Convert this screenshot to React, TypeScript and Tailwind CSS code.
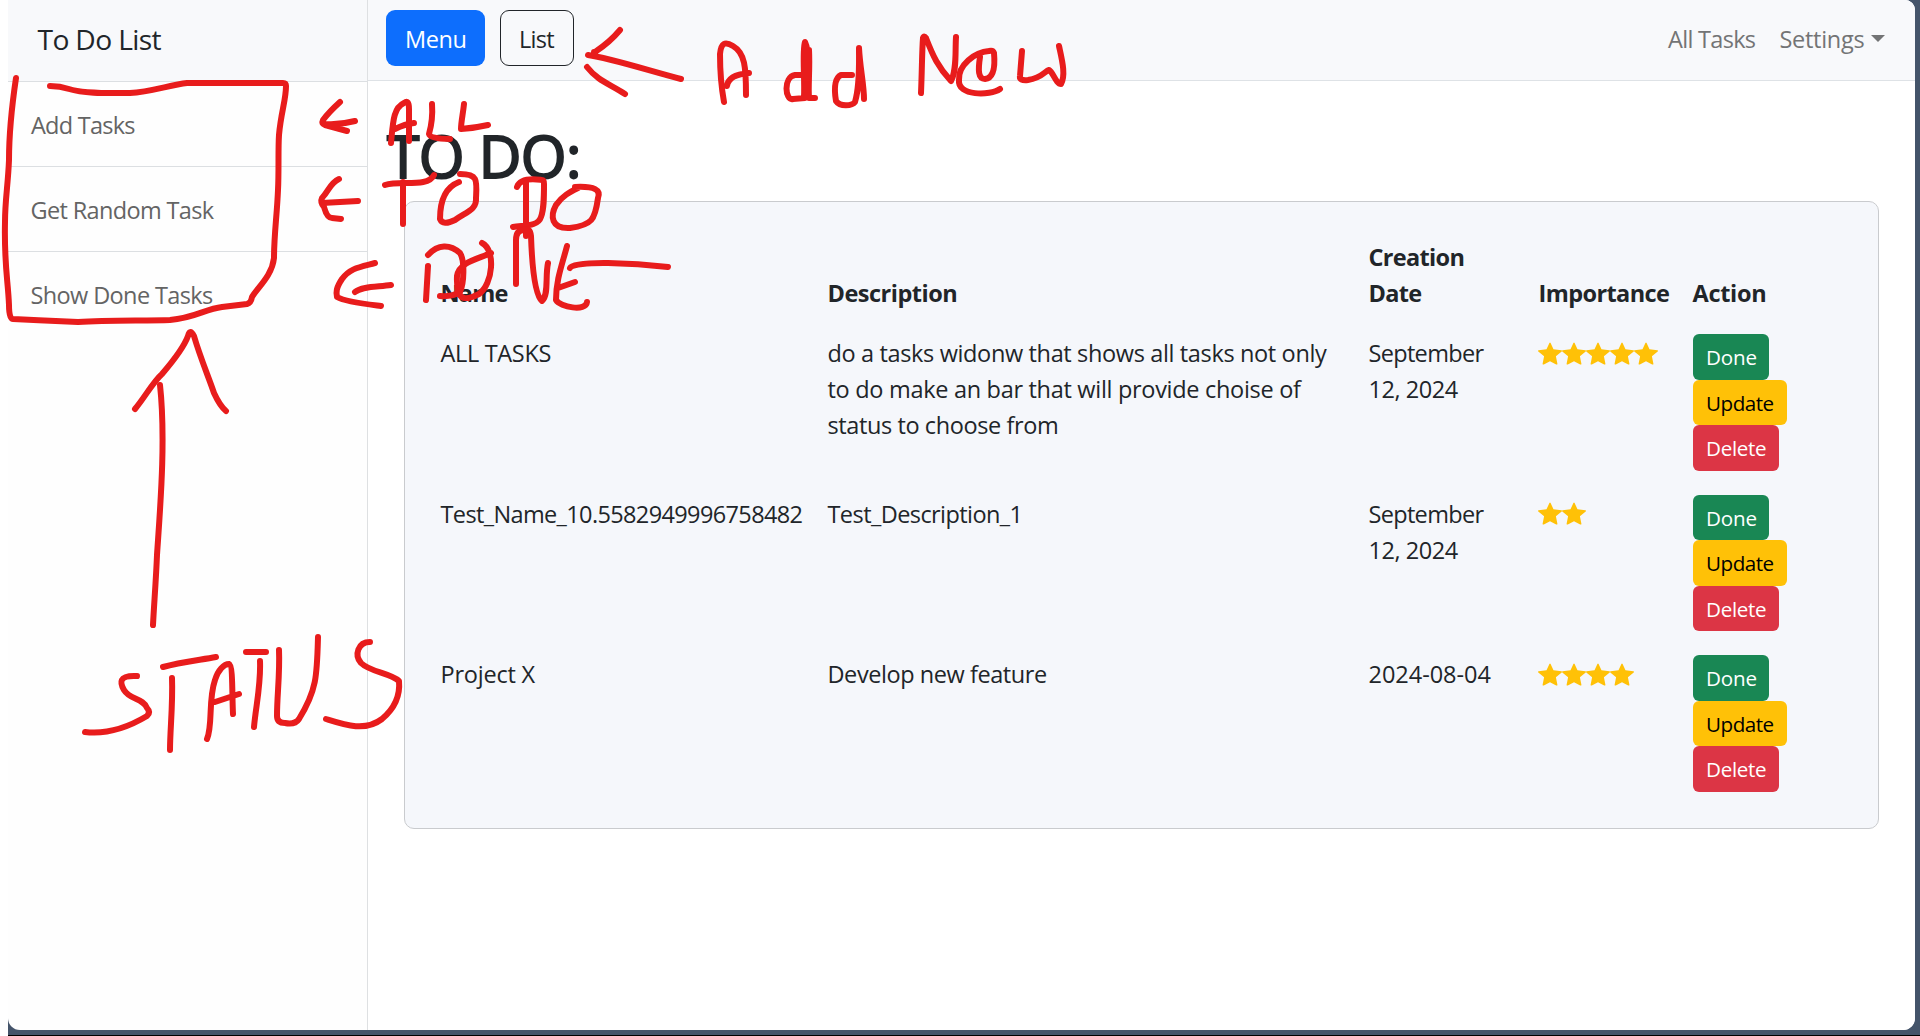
import React from 'react';

type Task = {
  name: string;
  nameClass: string;
  description: { text: string; cls: string }[];
  date: { text: string; cls: string }[];
  stars: number;
};

const september = [
  { text: 'September', cls: 'tracking-[-0.68px]' },
  { text: '12, 2024', cls: 'tracking-[-0.46px]' },
];

const tasks: Task[] = [
  {
    name: 'ALL TASKS',
    nameClass: 'tracking-[-0.33px]',
    description: [
      { text: 'do a tasks widonw that shows all tasks not only', cls: 'tracking-[-0.355px]' },
      { text: 'to do make an bar that will provide choise of', cls: 'tracking-[-0.3px]' },
      { text: 'status to choose from', cls: 'tracking-[-0.4px]' },
    ],
    date: september,
    stars: 5,
  },
  {
    name: 'Test_Name_10.5582949996758482',
    nameClass: 'tracking-[-0.625px]',
    description: [{ text: 'Test_Description_1', cls: 'tracking-[-0.57px]' }],
    date: september,
    stars: 2,
  },
  {
    name: 'Project X',
    nameClass: 'tracking-[-0.225px]',
    description: [{ text: 'Develop new feature', cls: 'tracking-[-0.43px]' }],
    date: [{ text: '2024-08-04', cls: 'tracking-[-0.028px]' }],
    stars: 4,
  },
];

const strokes = [
  // box round the sidebar links
  'M16 78 C12 105 9 130 9 160 C8 185 5 200 5 222 C4 265 8 280 9 305 Q9 319 13 319 C35 320 55 321 78 322 C110 320 145 321 170 320 C195 318 205 309 222 307 L247 304 Q251 303 252 297 C258 287 272 276 274 258 C274 235 277 215 278 190 C279 170 278 150 279 135 C281 112 286 100 286 86 Q286 83 283 83 L187 83 C170 85 150 92 130 93 C110 93 85 94 69 89 Q60 86 50 86',
  // small arrows beside the links
  'M340 102 Q329 112 323 120 Q321 124 325 125 L347 131 M325 124 Q340 125 355 121',
  'M339 179 C330 183 329 191 322 198 Q320 202 324 207 Q327 218 332 218 L341 219 M322 203 L358 201',
  'M375 263 C360 267 350 268 342 279 C336 288 336 292 337 297 C346 302 365 304 381 306 M355 292 C362 286 378 287 391 285',
  // arrow beside the List button
  'M620 30 Q610 42 595 52 M594 52 L594 54 M588 55 C610 58 650 71 681 79 M587 67 C598 81 610 84 625 94',
  // Add New
  'M724 102 C720 80 720 60 720 54 C721 43 725 41 733 46 C745 53 746 67 746 95 M749 73 C737 74 728 78 727 86',
  'M805 75 L795 75 C783 77 785 101 793 99 L805 98 C808 80 811 55 805 42 C802 50 805 80 804 97 M809 50 C810 70 808 85 809 98 L815 98',
  'M852 75 L841 75 C833 79 835 95 836 101 C840 107 852 106 855 102 C860 85 859 65 859 48 C860 68 864 85 864 99',
  'M921 93 C922 70 922 50 923 38 Q924 35 926 38 C933 56 938 67 951 81 C957 70 955 52 956 37',
  'M980 57 C978 70 978 79 985 79 C995 78 995 64 994 53 Q993 50 989 51 C975 52 958 65 959 80 C957 96 990 96 1000 89',
  'M1022 51 L1020 76 Q1019 81 1028 80 C1042 78 1045 71 1049 70 C1053 72 1056 84 1061 84 C1066 75 1062 60 1059 46',
  // ALL
  'M391 143 C393 123 393 108 404 103 Q409 99 409 109 L409 141 M395 129 Q405 124 414 123',
  'M432 104 C433 118 431 127 429 134 Q430 139 450 139',
  'M464 104 C463 114 461 122 461 129 Q475 128 488 125',
  // TO DO
  'M385 185 C400 180 428 188 434 175 M403 182 L403 224',
  'M459 182 C446 187 440 200 440 219 Q443 226 455 220 C466 212 477 210 476 198 C477 180 478 174 460 174',
  'M517 187 C521 176 540 180 542 180 Q544 180 544 184 C544 198 544 209 541 217 C538 227 523 225 513 227 M526 182 L526 236',
  'M575 187 C595 186 601 190 598 198 C595 220 592 225 570 228 C551 229 550 216 556 205 C562 196 570 192 578 188',
  // DONE
  'M428 266 L426 300 M428 255 C438 244 450 244 460 253 C465 261 464 283 460 292 Q452 297 440 296',
  'M482 243 C496 250 493 284 479 294 C463 302 456 300 457 276 C459 262 478 259 491 253',
  'M516 284 L516 240 Q516 230 524 230 Q530 227 531 236 C532 265 535 295 542 301 C549 295 545 277 548 263',
  'M567 246 C562 265 556 280 556 300 C560 307 586 312 587 302 M558 288 L575 282',
  'M570 268 C574 260 635 263 668 267',
  // long arrow
  'M135 409 C145 397 153 382 162 374 C174 360 184 347 188 336 Q190 328 194 336 C200 357 209 378 214 393 Q220 406 226 411',
  'M160 385 C166 440 160 510 157 555 C156 580 154 605 153 625',
  // STATUS
  'M137 676 C118 675 120 683 124 690 C130 700 143 698 147 708 Q151 712 147 716 C132 725 110 735 85 732',
  'M163 667 C180 662 200 660 216 657 M172 678 C173 705 170 730 170 750',
  'M207 739 C213 725 208 700 215 680 C218 670 224 664 229 664 C233 665 232 695 233 714 M215 702 L239 694',
  'M246 652 L266 652 M260 661 C261 685 256 705 254 727',
  'M279 650 C280 675 277 695 277 716 Q277 723 285 723 Q295 725 299 719 C317 690 317 675 318 637',
  'M370 642 C358 642 354 655 361 663 C370 672 390 673 399 681 Q401 703 382 719 C365 732 345 725 326 719',
];

function Star() {
  return (
    <svg viewBox="0 0 24 24" className="block h-6 w-6 shrink-0" fill="#ffc107">
      <path d="M11.4 .9Q12 0 12.6 .9L15.5 7.2L23.4 8.3Q24.5 8.6 23.7 9.4L17.9 14.2L19.4 21.7Q19.4 23 18.2 22.4L12 19.3L5.8 22.4Q4.6 23 4.6 21.7L6.1 14.2L.3 9.4Q-.5 8.6 .6 8.3L8.5 7.2Z" />
    </svg>
  );
}

const th = 'pr-3 pl-[11.5px] pt-[13px] pb-[11px] text-left align-bottom font-bold';
const td = 'pr-3 pl-[11.5px] pt-[13px] pb-[11px] align-top';
const action = 'block rounded-md pt-px pl-[13px] text-left text-[20.6px] leading-[44.5px]';

export default function App() {
  return (
    <div className="relative h-[1036px] w-[1920px] overflow-hidden bg-white pl-2 font-['Open_Sans',sans-serif] text-[23.5px] leading-9 text-[#212529]">
      <div className="h-full border-b border-black bg-[#44546a] pr-[5px] pb-[5px]">
        <div className="flex h-full overflow-hidden rounded-tr-[10px] rounded-b-[12px] bg-[#fefefe]">
          <aside className="w-[360px] shrink-0 border-r border-[#dee0e2]">
            <div className="h-[82px] border-b border-[#dcdfe2] bg-[#f8f9fb] pt-[21px] pl-[29.5px] text-[28.2px] tracking-[-0.65px]">To Do List</div>
            <nav className="text-[#646464]">
              <a className="block h-[85px] border-b border-[#dcdfe2] pt-[25px] pl-[23px] tracking-[-0.75px]">Add Tasks</a>
              <a className="block h-[85px] border-b border-[#dcdfe2] pt-[25px] pl-[22.5px] tracking-[-0.64px]">Get Random Task</a>
              <a className="block h-[85px] pt-[25px] pl-[22.5px] tracking-[-0.62px]">Show Done Tasks</a>
            </nav>
          </aside>

          <div className="flex min-w-0 flex-1 flex-col bg-white">
            <header className="flex h-[81px] items-start border-b border-[#dee2e6] bg-[#f8f9fb] pt-[10px] pr-[30px] pl-[18px]">
              <button className="h-14 w-[99px] rounded-[9px] bg-[#0d6efd] pt-px pl-[19px] text-left tracking-[-0.426px] text-white">Menu</button>
              <button className="ml-[15px] h-14 w-[74px] rounded-[9px] border border-[#212529] pt-px pl-[18px] text-left tracking-[-0.7px]">List</button>
              <nav className="ml-auto flex pt-[11px] text-[#737475]">
                <a className="w-[111.5px] tracking-[-0.7px]">All Tasks</a>
                <a className="flex tracking-[-0.284px]">
                  <span className="w-[91.5px]">Settings</span>
                  <span className="mt-[14px] h-0 w-0 border-x-[7px] border-t-[7px] border-x-transparent border-t-[#737475]" />
                </a>
              </nav>
            </header>

            <main>
              <h1 className="mt-[38px] h-[82px] pl-[19px] text-[58.8px] leading-[72px] font-medium tracking-[-0.558px] [-webkit-text-stroke:2px_#212529]">TO DO:</h1>
              <section className="mr-9 ml-9 h-[628px] rounded-[10px] border border-[#c9cbce] bg-[#f5f7fb] p-6">
                <table className="w-[1425px] table-fixed border-collapse">
                  <colgroup>
                    <col className="w-[387px]" />
                    <col className="w-[541px]" />
                    <col className="w-[170px]" />
                    <col className="w-[154px]" />
                    <col className="w-[173px]" />
                  </colgroup>
                  <thead>
                    <tr className="h-24">
                      <th className={`${th} tracking-[-0.8px]`}>Name</th>
                      <th className={`${th} tracking-[-0.5px]`}>Description</th>
                      <th className={`${th} tracking-[-0.672px]`}>Creation Date</th>
                      <th className={`${th} tracking-[-0.6px]`}>Importance</th>
                      <th className={`${th} tracking-[-0.3px]`}>Action</th>
                    </tr>
                  </thead>
                  <tbody>
                    {tasks.map((task) => (
                      <tr key={task.name} className="h-[160.5px]">
                        <td className={`${td} ${task.nameClass}`}>{task.name}</td>
                        <td className={td}>
                          {task.description.map((line) => (
                            <div key={line.text} className={`whitespace-nowrap ${line.cls}`}>{line.text}</div>
                          ))}
                        </td>
                        <td className={td}>
                          {task.date.map((line) => (
                            <div key={line.text} className={line.cls}>{line.text}</div>
                          ))}
                        </td>
                        <td className="pt-[19.5px] pr-0 pl-[11px] align-top">
                          <div className="flex">
                            {Array.from({ length: task.stars }, (_, i) => (
                              <Star key={i} />
                            ))}
                          </div>
                        </td>
                        <td className="px-3 py-3 align-top">
                          <button className={`${action} w-[76px] bg-[#198754] tracking-[-0.143px] text-white`}>Done</button>
                          <button className={`${action} w-[94px] bg-[#ffc107] tracking-[-0.49px] text-black`}>Update</button>
                          <button className={`${action} w-[86px] bg-[#dc3545] tracking-[-0.314px] text-white`}>Delete</button>
                        </td>
                      </tr>
                    ))}
                  </tbody>
                </table>
              </section>
            </main>
          </div>
        </div>
      </div>

      {/* freehand pen notes over the page */}
      <svg
        className="pointer-events-none absolute inset-0"
        width="1920"
        height="1036"
        viewBox="0 0 1920 1036"
        fill="none"
        stroke="#e81c1c"
        strokeWidth="6"
        strokeLinecap="round"
        strokeLinejoin="round"
      >
        {strokes.map((d) => (
          <path key={d} d={d} />
        ))}
      </svg>
    </div>
  );
}
